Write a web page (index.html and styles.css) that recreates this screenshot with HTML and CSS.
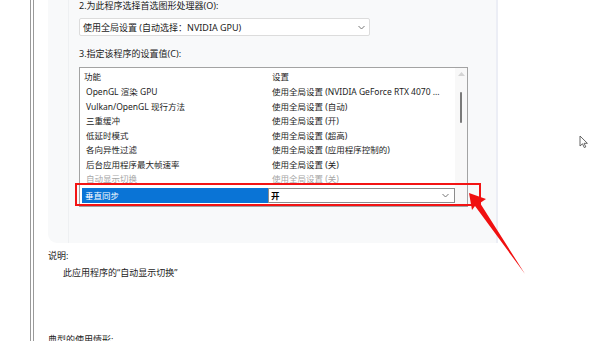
FILE: index.html
```html
<!DOCTYPE html>
<html lang="zh-CN">
<head>
<meta charset="utf-8">
<title>NVIDIA 程序设置</title>
<link rel="stylesheet" href="styles.css">
</head>
<body>
<div class="page">
  <div class="rail"></div>
  <div class="main">
    <div class="panel">
      <div class="panel-inner">
        <div class="label">2.为此程序选择首选图形处理器(O):</div>
        <div class="select">
          <span>使用全局设置 (自动选择：NVIDIA GPU)</span>
          <svg class="chev" width="7" height="5" viewBox="0 0 7 5"><polyline points="0.5,1 3.5,4 6.5,1" fill="none" stroke="#777" stroke-width="1"/></svg>
        </div>
        <div class="label label3">3.指定该程序的设置值(C):</div>
        <div class="list">
          <div class="list-body">
            <div class="row head"><span class="c1">功能</span><span class="c2">设置</span></div>
            <div class="row"><span class="c1">OpenGL 渲染 GPU</span><span class="c2">使用全局设置 (NVIDIA GeForce RTX 4070 ...</span></div>
            <div class="row"><span class="c1">Vulkan/OpenGL 现行方法</span><span class="c2">使用全局设置 (自动)</span></div>
            <div class="row"><span class="c1">三重缓冲</span><span class="c2">使用全局设置 (开)</span></div>
            <div class="row"><span class="c1">低延时模式</span><span class="c2">使用全局设置 (超高)</span></div>
            <div class="row"><span class="c1">各向异性过滤</span><span class="c2">使用全局设置 (应用程序控制的)</span></div>
            <div class="row"><span class="c1">后台应用程序最大帧速率</span><span class="c2">使用全局设置 (关)</span></div>
            <div class="row dim"><span class="c1">自动显示切换</span><span class="c2">使用全局设置 (关)</span></div>
            <div class="row sel">
              <span class="c1">垂直同步</span>
              <span class="c2"><b>开</b><svg class="chev" width="7" height="5" viewBox="0 0 7 5"><polyline points="0.5,1 3.5,4 6.5,1" fill="none" stroke="#777" stroke-width="1"/></svg></span>
            </div>
            <div class="row"><span class="c1">着色器缓存大小</span><span class="c2">使用全局设置 (驱动程序默认值)</span></div>
          </div>
          <div class="scroll">
            <svg class="up" width="7" height="4" viewBox="0 0 7 4"><polygon points="0,4 3.5,0 7,4" fill="#d4d4d4"/></svg>
            <div class="thumb"></div>
          </div>
        </div>
      </div>
    </div>
    <div class="desc-title">说明:</div>
    <div class="desc">此应用程序的“自动显示切换”</div>
    <div class="desc-title usage">典型的使用情形:</div>
  </div>
</div>

<div class="highlight"></div>
<svg class="arrow" width="600" height="341" viewBox="0 0 600 341">
  <polygon points="469,193 486,199 480,203 525,274 475,206 472,210" fill="#f01010"/>
</svg>
<svg class="cursor" width="10" height="14" viewBox="0 0 10 14">
  <path d="M1,1 L1,11 L3.5,8.8 L5.3,12.6 L6.8,11.9 L5.1,8.3 L8.4,8.3 Z" fill="#fff" stroke="#555" stroke-width="0.9" stroke-linejoin="round"/>
</svg>
</body>
</html>
```

FILE: styles.css
```css
html, body {
  margin: 0;
  padding: 0;
}
body {
  width: 600px;
  height: 341px;
  overflow: hidden;
  background: #ffffff;
  font-family: "Noto Sans", "Noto Sans CJK SC", sans-serif;
  font-size: 9px;
  color: #1c1c1c;
  position: relative;
}
.page {
  display: flex;
  height: 341px;
}
.rail {
  margin-left: 30px;
  width: 2px;
  height: 341px;
  border-left: 1px solid #9a9a9a;
  border-right: 1px solid #9a9a9a;
}
.main {
  margin-left: 14px;
  width: 452px;
}
.panel {
  width: 450px;
  height: 243px;
  background: #f8f9fa;
  border-right: 2px solid #eceef5;
  border-radius: 0 0 0 9px;
  padding-left: 20px;
  box-sizing: border-box;
}
.panel-inner {
  height: 243px;
  border-left: 1px solid #eef0f2;
  padding-left: 10px;
}
.label {
  height: 12px;
  line-height: 12px;
  white-space: nowrap;
}
.select {
  margin-top: 6px;
  width: 291px;
  height: 18px;
  box-sizing: border-box;
  background: #fff;
  border: 1px solid #dcdcdc;
  border-radius: 2px;
  display: flex;
  align-items: center;
  justify-content: space-between;
  padding: 0 4px 0 3px;
  white-space: nowrap;
}
.label3 {
  margin-top: 12px;
}
.list {
  margin-top: 7px;
  width: 389px;
  height: 140px;
  box-sizing: border-box;
  border: 1px solid #a3a3a3;
  background: #fff;
  display: flex;
  overflow: hidden;
}
.list-body {
  width: 375px;
  overflow: hidden;
  font-size: 8.5px;
}
.row {
  display: grid;
  grid-template-columns: 188px 187px;
  height: 14.5px;
  line-height: 14.5px;
  white-space: nowrap;
}
.row .c1 {
  padding-left: 6px;
  overflow: hidden;
}
.row .c2 {
  padding-left: 4px;
  overflow: hidden;
}
.row.head {
  height: 17px;
  line-height: 17px;
}
.row.head .c1 {
  padding-left: 4px;
}
.row.dim {
  color: #a6a6a6;
}
.row.sel {
  margin-top: 1px;
  height: 15px;
  line-height: 15px;
}
.row.sel .c1 {
  margin-left: 2px;
  padding-left: 3px;
  background: #0a74d6;
  color: #ffffff;
}
.row.sel .c2 {
  box-sizing: border-box;
  border: 1px solid #8c8c8c;
  padding: 0 5px 0 2px;
  display: flex;
  align-items: center;
  justify-content: space-between;
  line-height: 13px;
  color: #000;
}
.row.sel b {
  font-weight: 700;
}
.scroll {
  width: 12px;
  background: #f8f8f8;
  display: flex;
  flex-direction: column;
  align-items: center;
}
.up {
  margin-top: 4px;
}
.thumb {
  margin-top: 16px;
  width: 2px;
  height: 31px;
  background: #7a7a7a;
  border-radius: 1px;
}
.desc-title {
  margin-top: 7px;
  height: 12px;
  line-height: 12px;
}
.desc {
  margin-top: 5px;
  padding-left: 15px;
  height: 12px;
  line-height: 12px;
}
.desc-title.usage {
  margin-top: 55px;
}
.highlight {
  position: absolute;
  left: 75px;
  top: 183px;
  width: 402px;
  height: 19px;
  border: 2px solid #f31414;
}
.arrow {
  position: absolute;
  left: 0;
  top: 0;
}
.cursor {
  position: absolute;
  left: 579px;
  top: 135px;
}
```
